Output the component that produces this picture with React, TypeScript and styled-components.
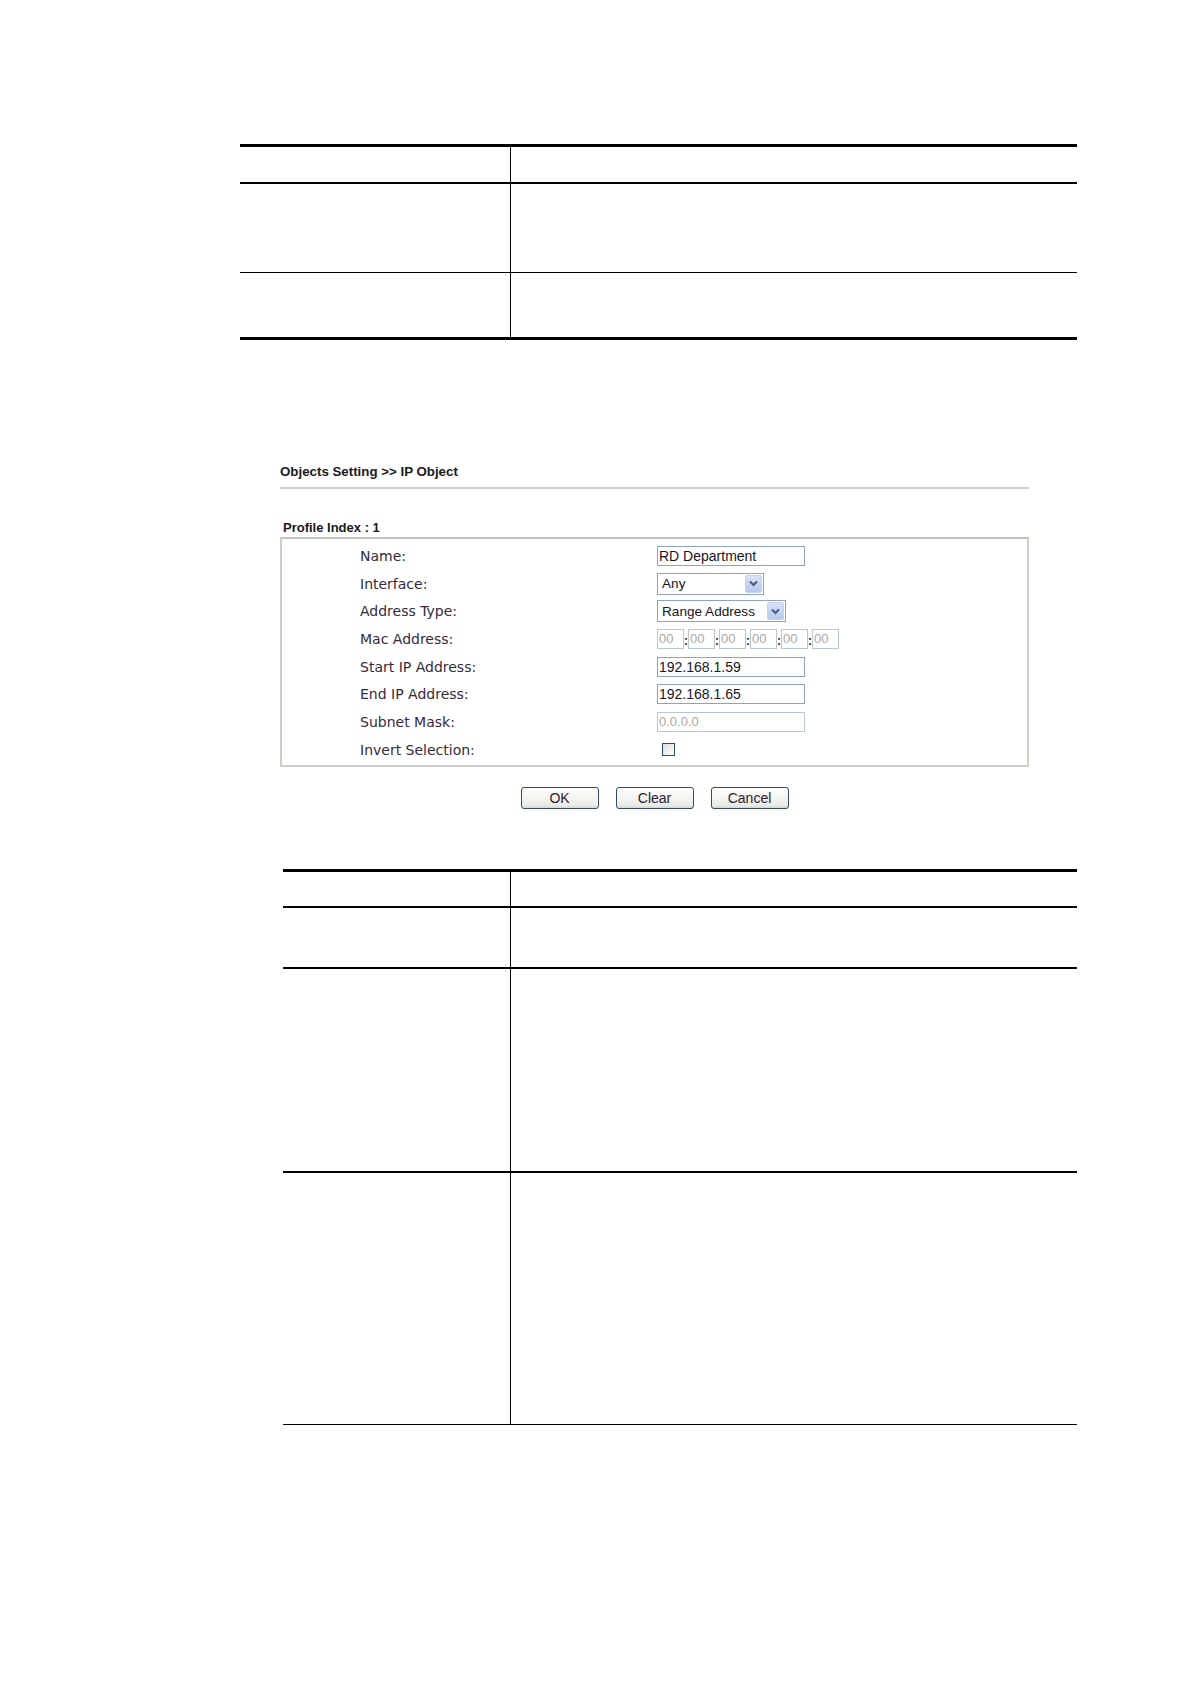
import styled, { createGlobalStyle } from 'styled-components';

const GlobalStyle = createGlobalStyle`
  html, body {
    margin: 0;
    padding: 0;
    background: #ffffff;
  }
  * {
    box-sizing: border-box;
  }
`;

const Page = styled.div`
  width: 1191px;
  min-height: 1684px;
  padding-top: 144px;
  background: #ffffff;
  font-family: 'Liberation Sans', Arial, sans-serif;
`;

const DocTable = styled.div<{ $left: number; $width: number; $bottom: number; $gap?: number }>`
  margin-left: ${(p) => p.$left}px;
  margin-top: ${(p) => p.$gap ?? 0}px;
  width: ${(p) => p.$width}px;
  border-top: 3px solid #000;
  border-bottom: ${(p) => p.$bottom}px solid #000;
`;

const DocRow = styled.div<{ $col: number; $height: number; $line: number }>`
  display: grid;
  grid-template-columns: ${(p) => p.$col}px 1fr;
  height: ${(p) => p.$height + p.$line}px;
  border-bottom: ${(p) => p.$line}px solid #000;
`;

const DocCell = styled.div`
  & + & {
    border-left: 1px solid #000;
  }
`;

const Screen = styled.div`
  margin: 124px 0 0 280px;
  width: 749px;
`;

const Title = styled.div`
  font: bold 13.3px/16px 'Liberation Sans', Arial, sans-serif;
  color: #1a1a1a;
  padding: 0 0 7px 0;
  border-bottom: 2px solid #cfcfc9;
`;

const ProfileLabel = styled.div`
  font: bold 13px/16px 'Liberation Sans', Arial, sans-serif;
  color: #1a1a1a;
  margin: 31px 0 1px 3px;
`;

const FormBox = styled.div`
  border: 2px solid #cfcfc8;
  border-top-color: #c4c4bc;
  padding: 3px 0 1px 78px;
`;

const FormRow = styled.div`
  display: grid;
  grid-template-columns: 297px 1fr;
  align-items: center;
  height: 27.7px;
`;

const Label = styled.div`
  font: 14px 'DejaVu Sans', Verdana, sans-serif;
  color: #352a3c;
`;

const TextBox = styled.div<{ $disabled?: boolean; $width?: number }>`
  width: ${(p) => p.$width ?? 148}px;
  height: 20px;
  border: 1px solid ${(p) => (p.$disabled ? '#b9c6d4' : '#8fa3bb')};
  padding: 0 2px 0 1px;
  font: ${(p) => (p.$disabled ? '13px' : '14px')}/18px 'Liberation Sans', Arial, sans-serif;
  color: ${(p) => (p.$disabled ? '#a8a8a8' : '#201424')};
  background: #fff;
  white-space: nowrap;
  overflow: hidden;
`;

const SelectBox = styled.div<{ $width: number }>`
  display: flex;
  align-items: center;
  justify-content: space-between;
  width: ${(p) => p.$width}px;
  height: 22px;
  border: 1px solid #8fa3bb;
  padding: 0 1px 0 4px;
  font: 13.6px 'Liberation Sans', Arial, sans-serif;
  color: #201424;
  background: #fff;
  white-space: nowrap;
`;

const ArrowButton = styled.span`
  display: flex;
  align-items: center;
  justify-content: center;
  flex: none;
  width: 17px;
  height: 18px;
  border-radius: 2px;
  background: linear-gradient(#d9e3f8, #b6c8ee);
  border: 1px solid #c4d2ec;
`;

const MacGroup = styled.div`
  display: flex;
  align-items: flex-end;
`;

const MacSep = styled.span`
  width: 4px;
  font: bold 12px/16px 'Liberation Sans', Arial, sans-serif;
  color: #222;
  text-align: center;
`;

const CheckBox = styled.span`
  display: block;
  width: 13px;
  height: 13px;
  margin-left: 5px;
  border: 1px solid #2a4e72;
  background: linear-gradient(135deg, #dcdcd6, #ffffff);
`;

const ButtonRow = styled.div`
  display: flex;
  justify-content: center;
  gap: 17px;
  margin: 20px 0 0 0;
`;

const Button = styled.button`
  width: 78px;
  height: 22px;
  padding: 0;
  border: 1px solid #2f4c6e;
  border-radius: 3px;
  background: linear-gradient(#ffffff, #ecebe6 85%, #d8d6cf);
  font: 14px 'Liberation Sans', Arial, sans-serif;
  color: #2a2030;
`;

const Chevron = () => (
  <svg width="11" height="9" viewBox="0 0 11 9">
    <polyline points="2,2.5 5.5,6 9,2.5" fill="none" stroke="#4a5f86" strokeWidth="2.2" />
  </svg>
);

const Dropdown = ({ value, width }: { value: string; width: number }) => (
  <SelectBox $width={width}>
    <span>{value}</span>
    <ArrowButton>
      <Chevron />
    </ArrowButton>
  </SelectBox>
);

const macParts = ['00', '00', '00', '00', '00', '00'];

const topRows = [
  { height: 35, line: 2 },
  { height: 88, line: 1 },
  { height: 64, line: 0 },
];

const bottomRows = [
  { height: 34, line: 2 },
  { height: 59, line: 2 },
  { height: 202, line: 2 },
  { height: 251, line: 0 },
];

const App = () => {
  return (
    <>
      <GlobalStyle />
      <Page>
        <DocTable $left={240} $width={837} $bottom={3}>
          {topRows.map((r, i) => (
            <DocRow key={i} $col={270} $height={r.height} $line={r.line}>
              <DocCell />
              <DocCell />
            </DocRow>
          ))}
        </DocTable>

        <Screen>
          <Title>Objects Setting &gt;&gt; IP Object</Title>
          <ProfileLabel>Profile Index : 1</ProfileLabel>
          <FormBox>
            <FormRow>
              <Label>Name:</Label>
              <TextBox>RD Department</TextBox>
            </FormRow>
            <FormRow>
              <Label>Interface:</Label>
              <Dropdown value="Any" width={107} />
            </FormRow>
            <FormRow>
              <Label>Address Type:</Label>
              <Dropdown value="Range Address" width={129} />
            </FormRow>
            <FormRow>
              <Label>Mac Address:</Label>
              <MacGroup>
                {macParts.map((m, i) => (
                  <MacGroup key={i}>
                    {i > 0 && <MacSep>:</MacSep>}
                    <TextBox $disabled $width={27}>
                      {m}
                    </TextBox>
                  </MacGroup>
                ))}
              </MacGroup>
            </FormRow>
            <FormRow>
              <Label>Start IP Address:</Label>
              <TextBox>192.168.1.59</TextBox>
            </FormRow>
            <FormRow>
              <Label>End IP Address:</Label>
              <TextBox>192.168.1.65</TextBox>
            </FormRow>
            <FormRow>
              <Label>Subnet Mask:</Label>
              <TextBox $disabled>0.0.0.0</TextBox>
            </FormRow>
            <FormRow>
              <Label>Invert Selection:</Label>
              <CheckBox />
            </FormRow>
          </FormBox>
          <ButtonRow>
            <Button>OK</Button>
            <Button>Clear</Button>
            <Button>Cancel</Button>
          </ButtonRow>
        </Screen>

        <DocTable $left={283} $width={794} $bottom={1} $gap={60}>
          {bottomRows.map((r, i) => (
            <DocRow key={i} $col={227} $height={r.height} $line={r.line}>
              <DocCell />
              <DocCell />
            </DocRow>
          ))}
        </DocTable>
      </Page>
    </>
  );
};

export default App;
